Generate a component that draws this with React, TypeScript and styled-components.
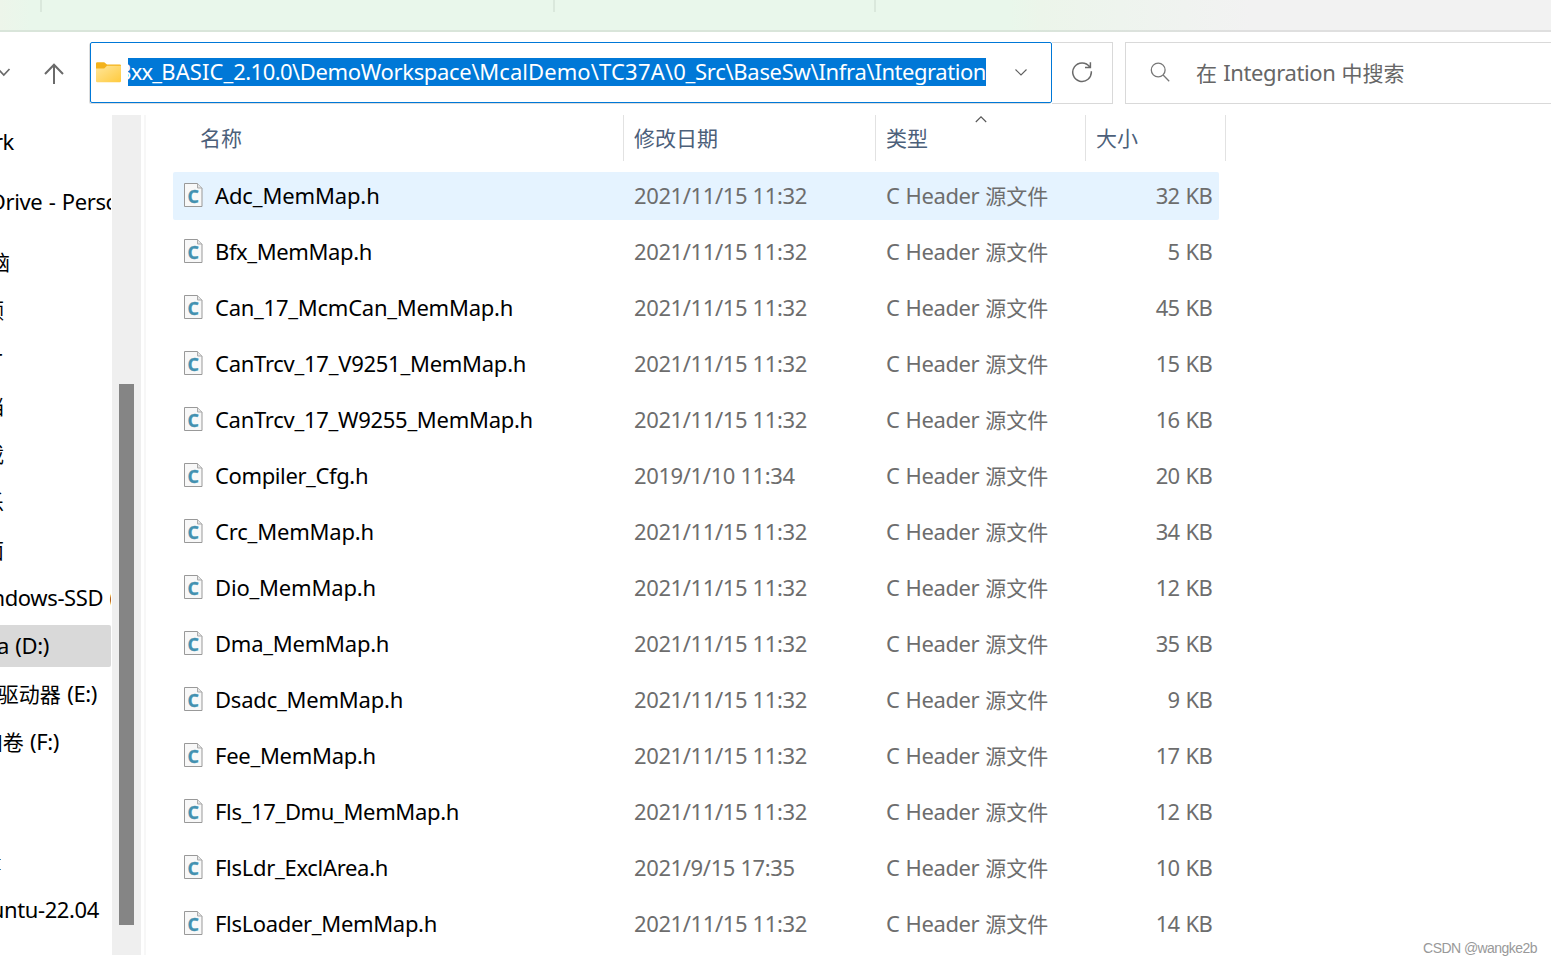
import React from 'react';
import styled, { createGlobalStyle } from 'styled-components';

const GlobalStyle = createGlobalStyle`
  * { box-sizing: border-box; }
  body {
    margin: 0;
    background: #fff;
    overflow: hidden;
    font-family: "Noto Sans", "Noto Sans CJK SC", sans-serif;
    font-size: 22px;
    color: #000;
  }
`;

const Window = styled.div`
  position: relative;
  width: 1551px;
  height: 965px;
  overflow: hidden;
  display: flex;
  flex-direction: column;
  background: #fff;
`;

const CommandBar = styled.div`
  flex: none;
  display: flex;
  height: 32px;
  border-bottom: 2px solid #d9e5da;
  border-image: linear-gradient(90deg, #d9e5da 66%, #dfdfdf 80%) 1;
  background: linear-gradient(90deg, #edf5ea 0, #e9f7eb 30px, #e9f7eb 1010px, #ecf5ea 1040px, #eef4ee 1120px, #f2f2f2 1250px);
`;

const BarSection = styled.div<{ $w: number }>`
  width: ${(p) => p.$w}px;
  height: 12px;
  border-right: 2px solid #dae8dc;
`;

const Toolbar = styled.div`
  flex: none;
  display: flex;
  height: 83px;
  padding-top: 10px;
`;

const NavButtons = styled.div`
  flex: none;
  width: 90px;
  height: 62px;
`;

const AddressBox = styled.div`
  flex: none;
  display: flex;
  align-items: center;
  width: 962px;
  height: 61px;
  padding-left: 5px;
  border: 1px solid #0078d7;
  border-radius: 2px;
  box-shadow: -1px 1px 0 #dcdcdc;
`;

const PathClip = styled.div`
  flex: none;
  display: flex;
  justify-content: flex-end;
  width: 858px;
  height: 28px;
  margin: 0 28px 2px 7px;
  overflow: hidden;
  background: #0078d7;
  color: #fff;
  line-height: 26px;
`;

const RefreshBox = styled.div`
  flex: none;
  display: flex;
  align-items: center;
  justify-content: center;
  width: 61px;
  height: 62px;
  padding-bottom: 2px;
  border: 1px solid #d9d9d9;
  border-left: 0;
`;

const SearchBox = styled.div`
  flex: none;
  display: flex;
  align-items: center;
  width: 440px;
  height: 62px;
  margin-left: 12px;
  padding: 0 0 2px 24px;
  border: 1px solid #d9d9d9;
  color: #666;
  gap: 24px;
  word-spacing: 0.8px;
`;

const Body = styled.div`
  flex: none;
  display: flex;
  height: 840px;
`;

const Sidebar = styled.div`
  width: 112px;
  padding-top: 6px;
  overflow: hidden;
`;

const SideRow = styled.div<{ $gap?: number; $active?: boolean }>`
  display: flex;
  align-items: center;
  width: 111px;
  height: 42px;
  margin-bottom: ${(p) => p.$gap ?? 6}px;
  padding-bottom: 2px;
  overflow: hidden;
  border-radius: 0 2px 2px 0;
  word-spacing: 1px;
  background: ${(p) => (p.$active ? '#d9d9d9' : 'transparent')};
`;

const SideLabel = styled.div<{ $end: number }>`
  flex: none;
  display: flex;
  justify-content: flex-end;
  width: ${(p) => p.$end}px;
`;

const Track = styled.div`
  width: 29px;
  padding: 269px 7px 0;
  background: #efefef;
`;

const Thumb = styled.div`
  height: 541px;
  background: #858585;
`;

const Divider = styled.div`
  width: 2px;
  margin-left: 3px;
  background: #f7f7f7;
`;

const FileList = styled.div`
  width: 1090px;
`;

const HeaderRow = styled.div`
  display: flex;
  height: 46px;
  margin-bottom: 11px;
`;

const HeaderCell = styled.div<{ $w: number; $pad: number }>`
  position: relative;
  width: ${(p) => p.$w}px;
  height: 46px;
  padding-left: ${(p) => p.$pad}px;
  border-right: 1px solid #e2e2e2;
  line-height: 45px;
  color: #4c607a;
`;

const SortMark = styled.svg`
  position: absolute;
  top: 0;
  left: 99px;
`;

const FileRow = styled.div<{ $hover?: boolean }>`
  display: flex;
  align-items: center;
  width: 1046px;
  height: 48px;
  margin: 0 0 8px 27px;
  padding: 0 7px 2px 10px;
  border-radius: 2px;
  color: #6d6d6d;
  background: ${(p) => (p.$hover ? '#e5f3ff' : 'transparent')};
`;

const NameCell = styled.div`
  display: flex;
  align-items: center;
  width: 451px;
  gap: 12px;
  color: #000;
`;
const DateCell = styled.div`
  width: 252px;
`;
const TypeCell = styled.div`
  width: 200px;
  word-spacing: 0.6px;
`;
const SizeCell = styled.div`
  flex: 1;
  text-align: right;
  word-spacing: 1px;
`;

const Latin = styled.span<{ $ls?: number }>`
  white-space: pre;
  letter-spacing: ${(p) => p.$ls ?? -0.38}px;
`;

const Han = styled.span`
  font-family: "Noto Sans CJK SC", sans-serif;
  font-size: 21px;
  font-weight: 400;
  line-height: 1;
  letter-spacing: 0;
`;

const Watermark = styled.div`
  position: absolute;
  right: 14px;
  bottom: 8px;
  font: 14px/18px "Liberation Sans", sans-serif;
  letter-spacing: -0.55px;
  color: #999;
`;

const HAN = /([\u4e00-\u9fff]+)/;

function Text({ children, ls }: { children: string; ls?: number }) {
  return (
    <Latin $ls={ls}>
      {children.split(HAN).map((part, i) => (HAN.test(part) ? <Han key={i}>{part}</Han> : part))}
    </Latin>
  );
}

function CFileIcon() {
  return (
    <svg width="20" height="26" viewBox="0 0 20 26">
      <path d="M1.5 1.5H14.5l4.5 4.5V24.5H1.5z" fill="#f8f8f8" stroke="#999" strokeWidth="1" />
      <path d="M14.5 1.5v4.5h4.5" fill="#e4e4e4" stroke="#aaa" strokeWidth="1" />
      <text x="10.2" y="21.2" textAnchor="middle" fontFamily="Open Sans" fontWeight="700" fontSize="18" fill="#4391b0" stroke="#4391b0" strokeWidth=".3">
        C
      </text>
    </svg>
  );
}

function FolderIcon() {
  return (
    <svg width="25" height="21" viewBox="0 0 25 21">
      <defs>
        <linearGradient id="folder" x1="0" y1="0" x2="1" y2="1">
          <stop offset="0" stopColor="#ffe69b" />
          <stop offset="1" stopColor="#ffca3d" />
        </linearGradient>
      </defs>
      <path d="M0 1.5Q0 .3 1.2.3H8.2L11 2.4H23.8Q25 2.4 25 3.6V8H0z" fill="#f3b21b" />
      <path d="M0 6.4H8.2L11 3.7H25V19Q25 20.3 23.8 20.3H1.2Q0 20.3 0 19z" fill="url(#folder)" />
    </svg>
  );
}

const path: [string, number][] = [
  ['3xx_', -0.8],
  ['BASIC_', 0.05],
  ['2.10.0\\', -0.55],
  ['DemoWorkspace\\', -0.32],
  ['McalDemo\\', 0.07],
  ['TC37A\\', 0.2],
  ['0_Src\\', -0.3],
  ['BaseSw\\', -0.3],
  ['Infra\\', -0.3],
  ['Integration', -0.44],
];

const sideItems: { label: string; end: number; gap?: number; active?: boolean }[] = [
  { label: 'Network', end: 14, gap: 18 },
  { label: 'OneDrive - Personal', end: 149, gap: 18 },
  { label: '此电脑', end: 10 },
  { label: '视频', end: 4 },
  { label: '图片', end: 4 },
  { label: '文档', end: 4 },
  { label: '下载', end: 4 },
  { label: '音乐', end: 4 },
  { label: '桌面', end: 4 },
  { label: 'Windows-SSD (C:)', end: 141 },
  { label: 'Data (D:)', end: 49, active: true },
  { label: '新驱动器 (E:)', end: 97 },
  { label: '新加卷 (F:)', end: 59 },
];

const files: [string, string, string, number][] = [
  ['Adc_MemMap.h', '2021/11/15 11:32', '32 KB', -0.13],
  ['Bfx_MemMap.h', '2021/11/15 11:32', '5 KB', -0.38],
  ['Can_17_McmCan_MemMap.h', '2021/11/15 11:32', '45 KB', -0.25],
  ['CanTrcv_17_V9251_MemMap.h', '2021/11/15 11:32', '15 KB', -0.26],
  ['CanTrcv_17_W9255_MemMap.h', '2021/11/15 11:32', '16 KB', -0.28],
  ['Compiler_Cfg.h', '2019/1/10 11:34', '20 KB', -0.38],
  ['Crc_MemMap.h', '2021/11/15 11:32', '34 KB', -0.18],
  ['Dio_MemMap.h', '2021/11/15 11:32', '12 KB', -0.18],
  ['Dma_MemMap.h', '2021/11/15 11:32', '35 KB', -0.23],
  ['Dsadc_MemMap.h', '2021/11/15 11:32', '9 KB', -0.21],
  ['Fee_MemMap.h', '2021/11/15 11:32', '17 KB', -0.28],
  ['Fls_17_Dmu_MemMap.h', '2021/11/15 11:32', '12 KB', -0.35],
  ['FlsLdr_ExclArea.h', '2021/9/15 17:35', '10 KB', -0.3],
  ['FlsLoader_MemMap.h', '2021/11/15 11:32', '14 KB', -0.33],
];

const Spacer = styled.div`
  height: 90px;
`;

const LinuxMark = styled.div`
  width: 1px;
  height: 11px;
  margin: 0 0 19px;
  border-top: 1px solid #3b86b8;
  border-bottom: 1px solid #3b86b8;
`;

export default function App() {
  return (
    <Window>
      <GlobalStyle />
      <CommandBar>
        <BarSection $w={42} />
        <BarSection $w={513} />
        <BarSection $w={321} />
      </CommandBar>
      <Toolbar>
        <NavButtons>
          <svg width="89" height="62" viewBox="0 0 89 62" fill="none" stroke="#6a6a6a">
            <path d="M-2 27L3.8 33L9.5 27" strokeWidth="1.7" />
            <path d="M54 42V23M45 32L54 22.7L63 32" strokeWidth="2" />
          </svg>
        </NavButtons>
        <AddressBox>
          <FolderIcon />
          <PathClip>
            {path.map(([part, spacing]) => (
              <Text key={part} ls={spacing}>
                {part}
              </Text>
            ))}
          </PathClip>
          <svg width="14" height="9" viewBox="0 0 14 9" fill="none" stroke="#606060" strokeWidth="1.1">
            <path d="M1.5 1.5L7 7L12.5 1.5" />
          </svg>
        </AddressBox>
        <RefreshBox>
          <svg width="22" height="22" viewBox="0 0 22 22" fill="none" stroke="#6a6a6a" strokeWidth="1.5">
            <path d="M20.3 10.3A9.3 9.3 0 1 1 18.7 5.9M19.4 1.2V6.4H14" />
          </svg>
        </RefreshBox>
        <SearchBox>
          <svg width="22" height="22" viewBox="0 0 22 22" fill="none" stroke="#777" strokeWidth="1.3">
            <circle cx="8.2" cy="9" r="6.9" />
            <path d="M13.1 14L19.2 20.2" />
          </svg>
          <Text>在 Integration 中搜索</Text>
        </SearchBox>
      </Toolbar>
      <Body>
        <Sidebar>
          {sideItems.map((s) => (
            <SideRow key={s.label} $gap={s.gap} $active={s.active}>
              <SideLabel $end={s.end}>
                <Text>{s.label}</Text>
              </SideLabel>
            </SideRow>
          ))}
          <Spacer />
          <LinuxMark />
          <SideRow>
            <SideLabel $end={99}>
              <Text>Ubuntu-22.04</Text>
            </SideLabel>
          </SideRow>
        </Sidebar>
        <Track>
          <Thumb />
        </Track>
        <Divider />
        <FileList>
          <HeaderRow>
            <HeaderCell $w={478} $pad={54}>
              <Text>名称</Text>
            </HeaderCell>
            <HeaderCell $w={252} $pad={10}>
              <Text>修改日期</Text>
            </HeaderCell>
            <HeaderCell $w={210} $pad={10}>
              <Text>类型</Text>
              <SortMark width="12" height="9" viewBox="0 0 12 9" fill="none" stroke="#555" strokeWidth="1.1">
                <path d="M.8 7L6 1.8L11.2 7" />
              </SortMark>
            </HeaderCell>
            <HeaderCell $w={140} $pad={10}>
              <Text>大小</Text>
            </HeaderCell>
          </HeaderRow>
          {files.map(([name, date, size, spacing], i) => (
            <FileRow key={name} $hover={i === 0}>
              <NameCell>
                <CFileIcon />
                <Text ls={spacing}>{name}</Text>
              </NameCell>
              <DateCell>
                <Text>{date}</Text>
              </DateCell>
              <TypeCell>
                <Text>C Header 源文件</Text>
              </TypeCell>
              <SizeCell>
                <Text ls={-0.7}>{size}</Text>
              </SizeCell>
            </FileRow>
          ))}
        </FileList>
      </Body>
      <Watermark>CSDN @wangke2b</Watermark>
    </Window>
  );
}
